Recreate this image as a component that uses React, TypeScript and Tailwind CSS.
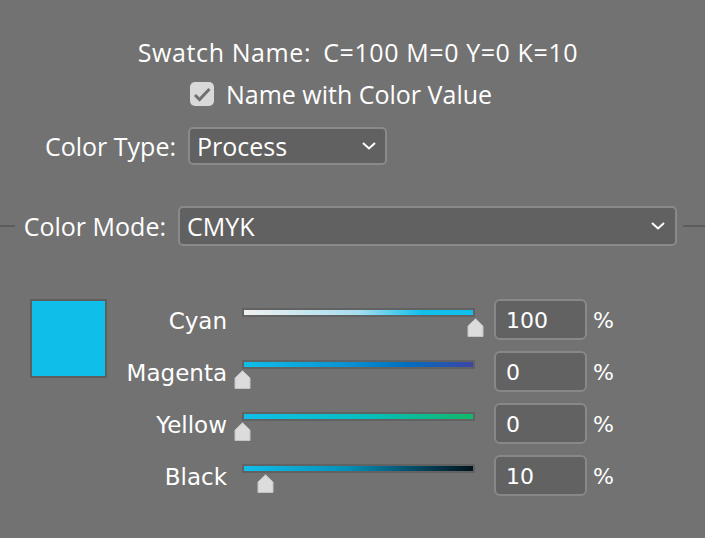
import React from "react";

const TOP_FONT = { fontFamily: '"Open Sans", "Liberation Sans", sans-serif' };
const ROW_FONT = { fontFamily: '"DejaVu Sans", "Liberation Sans", sans-serif' };

type Channel = {
    name: string;
    value: number;
    track: string;
};

const channels: Channel[] = [
    { name: "Cyan", value: 100, track: "bg-[linear-gradient(to_right,#f0f0f0,#a6def0_50%,#10bfea_78%,#10bfea)]" },
    { name: "Magenta", value: 0, track: "bg-[linear-gradient(to_right,#10bfea,#0a92d2_45%,#0070c0_70%,#3c45a6)]" },
    { name: "Yellow", value: 0, track: "bg-[linear-gradient(to_right,#10bfea,#06bfc4_50%,#12b86a)]" },
    { name: "Black", value: 10, track: "bg-[linear-gradient(to_right,#10bfea,#0590b8_45%,#044a64_75%,#01121c)]" },
];

const Chevron: React.FC = () => (
    <svg width="14" height="8" viewBox="0 0 14 8" fill="none">
        <path d="M1 1 L7 6.5 L13 1" stroke="#ffffff" strokeWidth="2" strokeLinejoin="miter" />
    </svg>
);

const Thumb: React.FC<{ value: number }> = ({ value }) => (
    <svg
        width="17"
        height="19"
        viewBox="0 0 17 19"
        className="absolute top-[19px]"
        style={{ left: (value / 100) * 233 - 8.5 }}
    >
        <path d="M1 18.5 L1 8 L8.5 0.8 L16 8 L16 18.5 Z" fill="#dcdcdc" stroke="#c4c4c4" strokeWidth="1" strokeLinejoin="round" />
    </svg>
);

const SliderRow: React.FC<{ channel: Channel }> = ({ channel }) => (
    <div className="flex flex-row items-center h-[40px]">
        <div className="w-[120px] text-right text-[23px] leading-[28px] pt-[4px]" style={ROW_FONT}>
            {channel.name}
        </div>
        <div className="relative ml-[15px] w-[233px] h-[40px] flex flex-col pt-[9px]">
            <div className="h-[9px] w-full border-2 border-[#626262]">
                <div className={"w-full h-full " + channel.track} />
            </div>
            <Thumb value={channel.value} />
        </div>
        <div
            className="ml-[19px] w-[93px] h-[41px] flex items-center pl-[10px] pt-[2px] bg-[#626262] border-2 border-[#888888] rounded-[6px] text-[22px]"
            style={ROW_FONT}
        >
            {channel.value}
        </div>
        <div className="ml-[6px] text-[22px] pt-[2px]" style={ROW_FONT}>%</div>
    </div>
);

const App: React.FC = () => {
    return (
        <div className="w-[705px] h-[538px] bg-[#727272] overflow-hidden text-white font-medium" style={TOP_FONT}>
            <div className="flex flex-col">
                <div className="pt-[37px] pl-[11px] flex flex-row justify-center gap-[12px] text-[25px] leading-[30px] tracking-[0.6px]">
                    <span>Swatch Name:</span>
                    <span>C=100 M=0 Y=0 K=10</span>
                </div>

                <div className="mt-[12px] pr-[23px] h-[30px] flex flex-row justify-center items-center gap-[12px]">
                    <div className="w-[24px] h-[24px] rounded-[5px] bg-[#d9d9d9] flex items-center justify-center">
                        <svg width="24" height="24" viewBox="0 0 24 24" fill="none">
                            <path d="M5 13 L9.5 17.5 L19.5 7" stroke="#707070" strokeWidth="3" />
                        </svg>
                    </div>
                    <span className="text-[25px] leading-[30px]">Name with Color Value</span>
                </div>

                <div className="mt-[18px] flex flex-row items-center">
                    <div className="w-[188px] pr-[12px] text-right text-[25px] leading-[30px]">Color Type:</div>
                    <div className="w-[199px] h-[38px] flex flex-row items-center justify-between pl-[7px] pr-[9px] bg-[#616161] border-2 border-[#8a8a8a] rounded-[5px]">
                        <span className="text-[25px] leading-[30px]">Process</span>
                        <Chevron />
                    </div>
                </div>

                <div className="mt-[41px] flex flex-row items-center">
                    <div className="w-[15px] h-[2px] bg-[#5c5c5c]" />
                    <div className="w-[163px] pr-[12px] text-right text-[25px] leading-[30px]">Color Mode:</div>
                    <div className="w-[499px] h-[40px] flex flex-row items-center justify-between pl-[7px] pr-[10px] bg-[#616161] border-2 border-[#8a8a8a] rounded-[5px]">
                        <span className="text-[25px] leading-[30px]">CMYK</span>
                        <Chevron />
                    </div>
                    <div className="ml-[6px] flex-1 h-[2px] bg-[#5c5c5c]" />
                </div>

                <div className="mt-[53px] flex flex-row font-normal">
                    <div className="ml-[30px] w-[77px] h-[79px] border-2 border-[#5e5e5e] bg-[#0fbfea]" />
                    <div className="flex flex-col gap-[12px]">
                        {channels.map(c => (
                            <SliderRow key={c.name} channel={c} />
                        ))}
                    </div>
                </div>
            </div>
        </div>
    );
};

export default App;
